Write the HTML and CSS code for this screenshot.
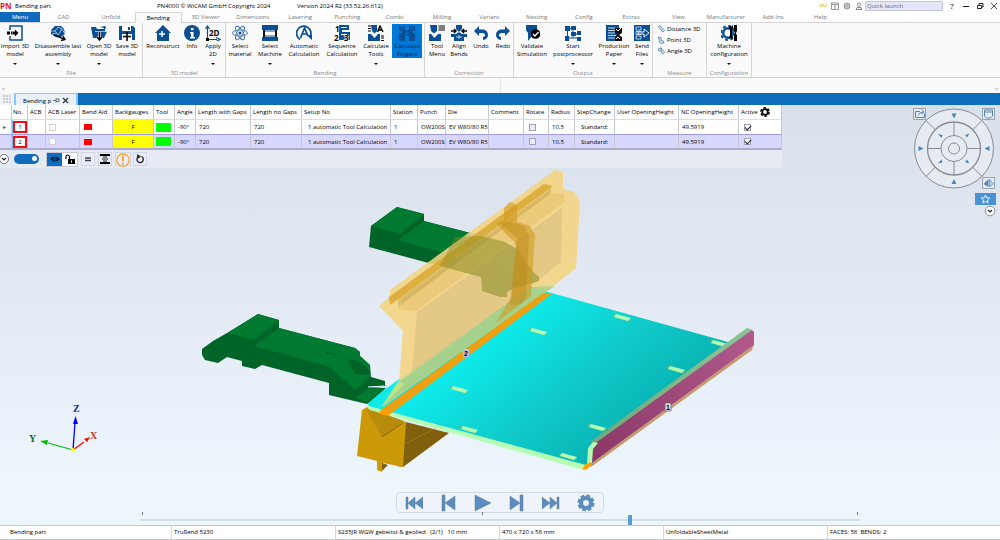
FILE: index.html
```
<!DOCTYPE html>
<html lang="en">
<head>
<meta charset="utf-8">
<title>Bending part</title>
<link rel="stylesheet" href="styles.css">
</head>
<body>
<div class="app">
<header class="titlebar">
  <span class="logo">PN</span>
  <span>Bending part</span>
  <span>PN4000 © WiCAM GmbH Copyright 2024</span>
  <span>Version 2024 R2 (33.52.26.612)</span>
  <div class="title-tools">
    <svg class="ti" viewBox="0 0 8 8"><path d="M0 3l2 2 2-2 2 2 2-3M1 2l2 1 2-1" fill="none" stroke="#e0cf58"/></svg>
    <svg class="ti" viewBox="0 0 8 8"><path d="M.5 1h7v6.500h-7zM.5 2.500h7M4 7V4M3 4h2" fill="none" stroke="#999"/></svg>
    <svg class="ti" viewBox="0 0 8 8"><circle cx="4" cy="4" r="3" fill="#bbb" stroke="#999"/></svg>
    <svg class="ti" viewBox="0 0 8 8"><circle cx="4" cy="2.500" r="1.600" fill="none" stroke="#888"/><path d="M1 7.500l1-2h4l1 2z" fill="none" stroke="#888"/></svg>
    <input class="quick" type="text" placeholder="Quick launch" aria-label="Quick launch">
    <button class="win" aria-label="Help">?</button>
    <button class="win" aria-label="Minimize"><svg class="ti" viewBox="0 0 8 8"><path d="M1 4.500h6" stroke="#222"/></svg></button>
    <button class="win" aria-label="Restore"><svg class="ti" viewBox="0 0 8 8"><path d="M1.500 3.500h4v3h-4zM3 3V1.500h4v3.500H6" fill="none" stroke="#222"/></svg></button>
    <button class="win" aria-label="Close"><svg class="ti" viewBox="0 0 8 8"><path d="M1 1l6 6M7 1L1 7" stroke="#222" stroke-width=".8"/></svg></button>
  </div>
</header>

<nav class="tabs">
  <button class="menu">Menu</button>
  <div class="tablist">
    <button>CAD</button><button>Unfold</button><button class="current">Bending</button><button>3D Viewer</button><button>Dimensions</button><button>Lasering</button><button>Punching</button><button>Combi</button><button>Milling</button><button>Variant</button><button>Nesting</button><button>Config</button><button>Extras</button><button>View</button><button>Manufacturer</button><button>Add-Ins</button><button>Help</button>
  </div>
</nav>

<section class="ribbon">
  <div class="group">
    <div class="tools tools-file">
      <button class="tool"><svg viewBox="0 0 16 16"><path d="M3 5V1h12v14H3v-4" fill="none" stroke="#0a4f94" stroke-width="1.500"/><path d="M0 6.500h3v3H0zM4 6.500h1.500v3H4zM6 6.500h2V4.500L11.500 8 8 11.500v-2H6z" fill="#000"/></svg><span>Import 3D<br>model</span><i></i></button>
      <button class="tool"><svg viewBox="0 0 16 16"><path d="M1 5l4-4h6l3 3 1 5-4 3H6L1 9z" fill="#0a4f94"/><path d="M1 6h4l3-4M5 6l3 4 4-6M8 2l4 2 3 5M2 9l5-1" fill="none" stroke="#fff" stroke-width=".6"/><path d="M4 10l10 4M11 15.500l4-1-2-3.500" fill="none" stroke="#111" stroke-width="1.500"/></svg><span>Disassemble last<br>assembly</span><i></i></button>
      <button class="tool"><svg viewBox="0 0 16 16"><path d="M0 2h5l1 2h8v3H5l-3 6z" fill="#0a4f94"/><path d="M4 6.500h12L13 13H2z" fill="#0a4f94"/><path d="M4 6.500h12" stroke="#fff" stroke-width=".6"/><path d="M9 2l5-1 1 1-1 3h-1V3z" fill="#0a4f94"/><path d="M8.500 7v7.500M6 12l2.500 3L11 12" fill="none" stroke="#fff" stroke-width="2.600"/><path d="M8.500 7v7.500M6 12l2.500 3L11 12" fill="none" stroke="#000" stroke-width="1.500"/></svg><span>Open 3D<br>model</span><i></i></button>
      <button class="tool"><svg viewBox="0 0 16 16"><path d="M0 1h14l2 2v12H0z" fill="#0a4f94"/><path d="M3 1h9v5H3zM3 9h10v6H3z" fill="#fff"/><path d="M9 2h2v3H9z" fill="#0a4f94"/><path d="M8 7v9M4 11.500h8" stroke="#000" stroke-width="1.600"/></svg><span>Save 3D<br>model</span></button>
    </div><h2>File</h2>
  </div>
  <div class="group">
    <div class="tools tools-model">
      <button class="tool"><svg viewBox="0 0 16 16"><path d="M8 0l8 8h-2v8H2V8H0z" fill="#0a4f94"/><path d="M7 6v6M4 9h6" stroke="#fff" stroke-width="1.500"/></svg><span>Reconstruct</span></button>
      <button class="tool"><svg viewBox="0 0 16 16"><circle cx="8" cy="8" r="8" fill="#0a4f94"/><path d="M7 3h2.500v2.200H7zM6 7h3.500v5H11v1.500H6V12h1V8.500H6z" fill="#fff"/></svg><span>Info</span></button>
      <button class="tool"><svg viewBox="0 0 16 16"><path d="M2.500 14V2M.5 4l2-3 2 3M2 14.500h10M11 12.500l4 2-4 2" fill="none" stroke="#0a4f94" stroke-width="1.200"/><path d="M1 13h3v3H1z" fill="#000"/><text x="4" y="10.500" class="glyph">2D</text></svg><span>Apply<br>2D</span><i></i></button>
    </div><h2>3D model</h2>
  </div>
  <div class="group">
    <div class="tools tools-bending">
      <button class="tool"><svg viewBox="0 0 16 16"><g fill="none" stroke="#4379ae" stroke-width=".9"><ellipse cx="8" cy="8" rx="7.500" ry="3"/><ellipse cx="8" cy="8" rx="7.500" ry="3" transform="rotate(60 8 8)"/><ellipse cx="8" cy="8" rx="7.500" ry="3" transform="rotate(120 8 8)"/></g><circle cx="8" cy="8" r="1.500" fill="#0a4f94"/></svg><span>Select<br>material</span></button>
      <button class="tool"><svg viewBox="0 0 16 16"><path d="M0 0h16v5H0zM0 12h16v4H0z" fill="#0a4f94"/><path d="M1 5h2v7H1zM13 5h2v7h-2z" fill="#111"/><path d="M3 6h10M3 11h10" stroke="#0a4f94"/></svg><span>Select<br>Machine</span><i></i></button>
      <button class="tool"><svg viewBox="0 0 16 16"><path d="M4 14.500A7.200 7.200 0 1 1 14 12" fill="none" stroke="#0a4f94" stroke-width="1.700"/><path d="M10.500 10H16v5z" fill="#0a4f94"/><path d="M4.500 13L8.500 3 12 11M6 9h5" fill="none" stroke="#0a4f94" stroke-width="1.700"/></svg><span>Automatic<br>Calculation</span></button>
      <button class="tool"><svg viewBox="0 0 16 16"><path d="M5 0h10v5H8v2h8v8H5z" fill="#0a4f94"/><path d="M7 2.500h6M7 9.500h6" stroke="#fff"/><text x="1" y="6.500" class="digit">1</text><text x="0" y="15.500" class="digit">2</text><text x="10" y="15.500" class="digit">3</text></svg><span>Sequence<br>Calculation</span></button>
      <button class="tool"><svg viewBox="0 0 16 16"><path d="M3 0h6v6L6.500 8.500 4 6zM0 9h3l3.500 4L10 9h2v7H0z" fill="#0a4f94"/><path d="M0 1h3M0 3.500h3M0 6h3M13 11h3M13 13h3M13 15.500h3" stroke="#000"/><path d="M9.500 7l2.500-6 3 6M10.500 5h4" fill="none" stroke="#000" stroke-width="1.400"/></svg><span>Calculate<br>Tools</span><i></i></button>
      <button class="tool active"><svg viewBox="0 0 16 16"><path d="M0 1h6v4h4V1h6v5h-3v2h3v8h-6v-5H6v5H0V8h3V6H0z" fill="#0a4f94"/><path d="M2 1v4M4 1v4M12 1v4M14 1v4M6 8h4M8 5v6" stroke="#0078d7" stroke-width=".7"/></svg><span>Calculate<br>Fingers</span></button>
    </div><h2>Bending</h2>
  </div>
  <div class="group">
    <div class="tools tools-correction">
      <button class="tool"><svg viewBox="0 0 16 16"><path d="M1 0h7v6L5 8.500 2 6zM0 9h2l3.500 4L9 9h3v7H0z" fill="#0a4f94"/><path d="M9.500 1H16M9.500 3H16M9.500 5H16" stroke="#000"/></svg><span>Tool<br>Menu</span></button>
      <button class="tool"><svg viewBox="0 0 16 16"><path d="M5 0h6v4L8 7 5 4zM0 9h5l3-2 3 2h5v3h-3v4H3v-4H0z" fill="#0a4f94"/><path d="M0 6h5M3 4l2 2-2 2M16 6h-5M13 4l-2 2 2 2" fill="none" stroke="#000" stroke-width="1.500"/><path d="M5 12h6M8 10v4" stroke="#fff" stroke-width=".7"/></svg><span>Align<br>Bends</span></button>
      <button class="tool"><svg viewBox="0 0 16 16"><path d="M1 6l5-5v3.500h3.500C13 4.500 15 7 15 10s-2 4.500-5 5v-3c1.500 0 2-1 2-2s-1-2-2.500-2H6v3z" fill="#0a4f94"/></svg><span>Undo</span></button>
      <button class="tool"><svg viewBox="0 0 16 16"><path d="M15 6l-5-5v3.500H6.500C3 4.500 1 7 1 10s2 4.500 5 5v-3c-1.500 0-2-1-2-2s1-2 2.500-2H10v3z" fill="#0a4f94"/></svg><span>Redo</span></button>
    </div><h2>Correction</h2>
  </div>
  <div class="group">
    <div class="tools tools-output">
      <button class="tool"><svg viewBox="0 0 16 16"><path d="M2 0h11v13l-5-2-4 5V8L2 5z" fill="#0a4f94"/><circle cx="11.500" cy="9" r="4.800" fill="#000"/><path d="M9 9l2 2 3.500-4" fill="none" stroke="#fff" stroke-width="1.300"/></svg><span>Validate<br>Simulation</span></button>
      <button class="tool"><svg viewBox="0 0 16 16"><path d="M0 1h5v5H0zM6 7h5v4H6zM0 11h4v5H0zM12 6h4v4h-4zM12 12h4v4h-4zM6 1h5v4H6z" fill="#0a4f94"/><path d="M5 3.500h2M2.500 6v6M4 13h4v-2M11 9h1M8 5v3M8 13h5" fill="none" stroke="#0a4f94"/></svg><span>Start<br>postprocessor</span><i></i></button>
      <button class="tool"><svg viewBox="0 0 16 16"><path d="M0 0h13v16H0z" fill="#0a4f94"/><path d="M2 3h7M2 5.500h8M2 8h7M2 10.500h8M2 13h7" stroke="#dce8f4" stroke-width=".9"/><path d="M9 3h7v5l-3 2 3 2v4H9v-4l3-2-3-2z" fill="#111"/><path d="M10 4l2 2 3-3M10 14l2-2 2 2" stroke="#fff" fill="none"/></svg><span>Production<br>Paper</span><i></i></button>
      <button class="tool"><svg viewBox="0 0 16 16"><path d="M0 0h16v16H0z" fill="#0a4f94"/><path d="M2 2h5v3H2zM2 6.500h5v3H2zM2 11h5v3H2z" fill="none" stroke="#dce8f4" stroke-width=".8"/><path d="M4 7h6V4l5 4-5 4V9H4z" fill="#0a4f94" stroke="#fff" stroke-width=".9"/></svg><span>Send<br>Files</span><i></i></button>
    </div><h2>Output</h2>
  </div>
  <div class="group">
    <div class="measure">
      <button><svg viewBox="0 0 9 9"><path d="M1 2l2-1 5 5-2 2zM3 4l1-1M5 6l1-1" fill="#dbe8f5" stroke="#3d6fa5" stroke-width=".8"/></svg>Distance 3D</button>
      <button><svg viewBox="0 0 9 9"><path d="M1 1l3 1v3l3 1v2H3L2 5z" fill="#dbe8f5" stroke="#3d6fa5" stroke-width=".8"/></svg>Point 3D</button>
      <button><svg viewBox="0 0 9 9"><path d="M1 2l3-1 4 5-2 2-2-3-3-1zM4 1v4" fill="#dbe8f5" stroke="#3d6fa5" stroke-width=".8"/></svg>Angle 3D</button>
    </div><h2>Measure</h2>
  </div>
  <div class="group">
    <div class="tools tools-config">
      <button class="tool"><svg viewBox="0 0 16 16"><circle cx="7" cy="8" r="4.800" fill="none" stroke="#0a4f94" stroke-width="2.500"/><circle cx="7" cy="8" r="7" fill="none" stroke="#0a4f94" stroke-width="2" stroke-dasharray="3 2.500"/><path d="M8 0l2 2 2-2v4l-1 1v6l1 1v2l-2-1-2 1v-2l1-1V5L8 4z" fill="#000"/><path d="M13 0h3v6l-1 2v1l1 1v6h-3v-6l1-1V8l-1-2z" fill="#000"/></svg><span>Machine<br>configuration</span><i></i></button>
    </div><h2>Configuration</h2>
  </div>
</section>
<div class="strip"><span>▿</span><b></b><span>▿</span></div>

<div class="docbar">
  <span class="grid-handle"><svg viewBox="0 0 8 8"><path d="M0 1h8M0 4h8M0 7h8" stroke="#c8cdd4" stroke-width="2" stroke-dasharray="2 1"/></svg></span>
  <div class="doctab"><span>Bending p</span>
    <svg viewBox="0 0 7 7"><path d="M0 3.500h3M3 1.500v4M3 2h3v2.500H3" fill="none" stroke="#555" stroke-width=".8"/></svg>
    <button aria-label="Close tab"><svg viewBox="0 0 7 7"><path d="M1 1l5 5M6 1L1 6" stroke="#333" stroke-width="1.200"/></svg></button>
  </div>
</div>

<main class="view">
  <svg class="scene" viewBox="0 105 1000 420" role="img" aria-label="3D bending simulation">
    <defs>
      <linearGradient id="plate" gradientUnits="userSpaceOnUse" x1="480" y1="345" x2="590" y2="480"><stop offset="0" stop-color="#0eeaea"/><stop offset=".5" stop-color="#10caca"/><stop offset="1" stop-color="#08b0b0"/></linearGradient>
      <linearGradient id="flange" gradientUnits="userSpaceOnUse" x1="592" y1="455" x2="754" y2="335"><stop offset="0" stop-color="#8a3868"/><stop offset="1" stop-color="#b25a8c"/></linearGradient>
      <linearGradient id="rim" gradientUnits="userSpaceOnUse" x1="592" y1="445" x2="754" y2="330"><stop offset="0" stop-color="#70a87e"/><stop offset="1" stop-color="#8cc496"/></linearGradient>
      <g id="slot"><path d="M-9-3l13 3 5 3-4 1-13-4z" fill="#70b87a"/><path d="M-6-3L9 1 6 4-8 0z" fill="#b4ffb4"/></g>
    </defs>
    <!-- rear gauge finger -->
    <path d="M371 226L397 207 424 214V221L505 242 518 250 532 271 539 277V281L514 288 507 292V297L500 297 482 291V288L481 277 369 247z" fill="#006428"/>
    <path d="M371 226L397 207 424 214 400 234z" fill="#007a30"/><path d="M424 221L505 242 518 250 532 271 524 278 448 254 398 240z" fill="#007a30"/>
    <!-- die -->
    <path d="M406 422l43 11-46 34-6-1z" fill="#80600c"/><path d="M405 444l35-18" stroke="#b08a20" stroke-width=".6"/>
    <path d="M362 410l5-3 39 15-3 45-20-4-1 9-5-2v-9l-20-5z" fill="#cc9a08"/><path d="M366 409l38 12-22 16z" fill="#b88b0a"/><path d="M382 437l21-14" stroke="#80600c"/><path d="M382 463l6 2-6 6z" fill="#80600c"/>
    <!-- sheet -->
    <path d="M367 402l31-22 132-93 198 55 7 3-138 99-5 22-9 2-216-62z" fill="url(#plate)"/>
    <path d="M367 402l2 4 217 59-2 5-214-60-3-3z" fill="#b4ffb4"/>
    <use href="#slot" x="538" y="331"/><use href="#slot" x="459" y="389"/><use href="#slot" x="469" y="429"/><use href="#slot" x="568" y="456"/><use href="#slot" x="597" y="427"/><use href="#slot" x="676" y="369"/><use href="#slot" x="622" y="317"/><use href="#slot" x="719" y="343"/>
    <!-- flange -->
    <path d="M592 463l162-118-2 5-161 117z" fill="#c79a6c"/>
    <path d="M590 442l157-114 6 2-156 115z" fill="url(#rim)"/>
    <path d="M592 463v-15l5-6 155-112 2 2v13z" fill="url(#flange)"/>
    <path d="M587 464l1-16 5-6 5 1-5 6-1 14z" fill="#b4ffb4"/><path d="M586 464l5-2 1 3-6 5-4-1z" fill="#ffa000"/>
    <!-- punch -->
    <path d="M379 306L390 296V290L555 170 563 172V189L574 192 580 201 576 268 546 292 382 407 399 382 403 331z" fill="#f5d480" fill-opacity=".88"/>
    <path d="M417 312L562 208 561 262 530 287 412 372z" fill="#bfa070" fill-opacity=".28"/>
    <path d="M416 311L565 202 564 194 548 193 406 296 398 309z" fill="#dcb050" fill-opacity=".3"/>
    <path d="M389 297l155-113 9 2-163 119z" fill="#d6a224" fill-opacity=".75"/>
    <path d="M390 305l161-117 0 5-153 114v-8z" fill="#b38f30" fill-opacity=".35"/>
    <path d="M399 382l131-95 25-1-173 120z" fill="#60c88c" fill-opacity=".42"/>
    <path d="M381 407l17-26 7 3z" fill="#d7ed7e" fill-opacity=".6"/>
    <path d="M455 237L480 236 505 242 518 250 532 271 539 277V281L514 288 507 292V297L500 297 482 291V288L481 277 440 266z" fill="#84861e" fill-opacity=".4"/>
    <path d="M504 208l6-6 7 3v17l13 4 5 9-4 61-35 27 16-27 4-52-20-21 8-3z" fill="#d09a1c" fill-opacity=".6"/><path d="M512 222l12 4 5 9-3 63-5 6-11 1 7-67-17-15z" fill="#b88618" fill-opacity=".4"/>
    <path d="M382 409l160-115 11-1-164 122-9-1z" fill="#eda012"/><path d="M380 411l4-2 6 2-1 5-9-2z" fill="#ffa000"/>
    <!-- front gauge finger -->
    <path d="M202 349l11-8 14-8 31-19 21 6v8l76 20 5 4v4l10 9 1 12 14 4v5l-17 1 18 1-19 16-38-9v-12l-67-18-7 4-13-3v-5l-15-4-9 6-13-3-3-5z" fill="#006428"/>
    <path d="M228 333l30-19 21 6-25 20zM279 328l76 20 5 4v4l10 9v12l-15 13-25-23-76-21zM368 389l17-1-18 14-12-4z" fill="#007a30"/><path d="M347 359l12 2 11 10-2 4-13-1z" fill="#006428"/><path d="M325 352l13 3M326 354h4" stroke="#006428"/><path d="M368 387l16-1" stroke="#eaf2fa"/>
    <!-- bend tags -->
    <path d="M463 349h6v8h-6z" fill="#b9bdf0"/><text x="464" y="356" class="tag">2</text><path d="M665 403h6v8h-6z" fill="#ddd" stroke="#555" stroke-width=".6"/><text x="666" y="410" class="tag">1</text>
    <!-- axes -->
    <path d="M73 450l2-27" stroke="#00f" stroke-width="1.300"/><path d="M75.500 416l2.500 8h-5z" fill="#00f"/><path d="M73 450l-25-7" stroke="#0b0" stroke-width="1.200"/><path d="M40 441l8-1-1 5z" fill="#0b0"/><path d="M73 450l11-8" stroke="red" stroke-width="1.200"/><path d="M90 437l-3 5-3-3z" fill="red"/><circle cx="73" cy="450" r="2" fill="#ff0"/>
    <text x="73" y="412" class="axis axis-z">Z</text><text x="29" y="442" class="axis axis-y">Y</text><text x="90" y="439" class="axis axis-x">X</text>
  </svg>

  <div class="panel">
    <table>
      <colgroup><col class="w12"><col class="w16"><col class="w18"><col class="w34"><col class="w33"><col class="w41"><col class="w21"><col class="w21"><col class="w55"><col class="w51"><col class="w89"><col class="w27"><col class="w28"><col class="w43"><col class="w35"><col class="w25"><col class="w26"><col class="w40"><col class="w64"><col class="w60"><col class="w43"></colgroup>
      <thead><tr><th></th><th>No.</th><th>ACB</th><th>ACB Laser</th><th>Bend Aid</th><th>Backgauges</th><th>Tool</th><th>Angle</th><th>Length with Gaps</th><th>Length no Gaps</th><th>Setup No</th><th>Station</th><th>Punch</th><th>Die</th><th>Comment</th><th>Rotate</th><th>Radius</th><th>StepChange</th><th>User OpeningHeight</th><th>NC OpeningHeight</th><th>Active <svg class="cog" viewBox="0 0 10 10"><circle cx="5" cy="5" r="2.800" fill="none" stroke="#000" stroke-width="1.800"/><circle cx="5" cy="5" r="4.200" fill="none" stroke="#000" stroke-width="1.400" stroke-dasharray="2.600 1.800"/></svg></th></tr></thead>
      <tbody>
        <tr><td class="mark">▸</td><td class="no"><span>1</span></td><td></td><td class="pick"><input type="checkbox" class="faint" aria-label="ACB Laser 1"></td><td><span class="swatch"></span></td><td class="gauge">F</td><td class="ok"><span></span></td><td>-90°</td><td>720</td><td>720</td><td class="setup">1 automatic Tool Calculation</td><td>1</td><td>OW200S</td><td>EV W80/80 R5</td><td></td><td><input type="checkbox" aria-label="Rotate 1"></td><td>10.5</td><td class="step">Standard:</td><td></td><td>49.5919</td><td><input type="checkbox" checked aria-label="Active 1"></td></tr>
        <tr class="selected"><td></td><td class="no"><span>2</span></td><td></td><td class="pick"><input type="checkbox" class="faint" aria-label="ACB Laser 2"></td><td><span class="swatch"></span></td><td class="gauge">F</td><td class="ok"><span></span></td><td>-90°</td><td>720</td><td>720</td><td class="setup">1 automatic Tool Calculation</td><td>1</td><td>OW200S</td><td>EV W80/80 R5</td><td></td><td><input type="checkbox" aria-label="Rotate 2"></td><td>10.5</td><td class="step">Standard:</td><td></td><td>49.5919</td><td><input type="checkbox" checked aria-label="Active 2"></td></tr>
      </tbody>
    </table>
    <div class="panel-tools">
      <button class="round" aria-label="Collapse"><svg viewBox="0 0 10 10"><circle cx="5" cy="5" r="4.500" fill="#fff" stroke="#555" stroke-width=".8"/><path d="M3 4l2 2 2-2" fill="none" stroke="#222" stroke-width="1.200"/></svg></button>
      <input class="switch" type="checkbox" role="switch" checked aria-label="Show bends">
      <div class="pair">
        <button class="on" aria-label="Show"><svg viewBox="0 0 10 10"><path d="M0 5q5-5 10 0-5 5-10 0z" fill="#001a40"/><circle cx="5" cy="5" r="1.600" fill="#0f6cbd"/><circle cx="5" cy="5" r=".8" fill="#001a40"/></svg></button>
        <button aria-label="Unlock"><svg viewBox="0 0 10 10"><path d="M3 5h7v5H3z" fill="#000"/><path d="M1 5V2.500Q1 1 2.500 1T4.500 2.500V5" fill="none" stroke="#000" stroke-width="1.200"/><path d="M6.500 6.500v2" stroke="#fff"/></svg></button>
      </div>
      <button class="flat" aria-label="Equal"><svg viewBox="0 0 10 10"><path d="M2 4h6M2 6.500h6" stroke="#444" stroke-width="1.300"/></svg></button>
      <button class="flat" aria-label="Align"><svg viewBox="0 0 10 10"><path d="M0 1h10M0 9h10" stroke="#000" stroke-width="2"/><path d="M2 5h6M3 3h4M3 7h4" stroke="#222"/></svg></button>
      <div class="joined">
        <button class="flat warn" aria-label="Warnings"><svg viewBox="0 0 14 14"><circle cx="7" cy="7" r="6.200" fill="none" stroke="#f7a21b" stroke-width="1.200"/><path d="M7 2.500v6M7 9.800v1.800" stroke="#f7a21b" stroke-width="1.700"/></svg></button>
        <button class="flat" aria-label="Reset"><svg viewBox="0 0 10 10"><path d="M3 3a3.200 3.200 0 1 0 3.500-.5" fill="none" stroke="#222" stroke-width="1.300"/><path d="M2 0l4 2.500L2.500 5z" fill="#222"/></svg></button>
      </div>
    </div>
  </div>

  <svg class="wheel" viewBox="910 105 90 115" role="img" aria-label="View navigation">
    <g fill="none" stroke="#868c92"><circle cx="954" cy="148.500" r="39.500" fill="#e6ebf2"/><circle cx="954" cy="148.500" r="26.500" stroke-width="1.300"/><circle cx="954" cy="148.500" r="13"/><circle cx="954" cy="148.500" r="5.500"/><path d="M954 122v13.500M954 161.500V175M927.500 148.500H941M967 148.500h13.500M926 120.500l9.500 9.500M982 120.500l-9.500 9.500M926 176.500l9.500-9.500M982 176.500l-9.500-9.500"/></g>
    <path d="M951.500 113.500h5l-2.500 5zM951.500 184h5l-2.500-5zM918.500 146v5l5-2.500zM989.500 146v5l-5-2.500zM938 134l4.500 1-1 3zM969.500 133.500l-4.500 1.500 2 2.500zM938 163.500l4.500-1-1-3zM969.500 163.500l-4.500-1.500 2-2.500z" fill="#4a86bd"/>
    <g fill="#e8ecf2" stroke="#9aa0a6"><path d="M913.500 108.500h12v11h-12zM982.500 108.500h12v11h-12zM982.500 177.500h12v11h-12z"/></g>
    <path d="M920 111.500h-4.500v6h9v-4M918 115.500q1-3 5-3.500M921.500 110l2.500 2-2.500 2M984.500 110h8v6l-2 2h-4l-2-2zM984.500 112h8" fill="none" stroke="#4a86bd"/><path d="M988.500 179v8l-5-3z" fill="#4a86bd"/><path d="M989.500 179v8l4-3z" fill="#b5cde4" stroke="#4a86bd" stroke-width=".6"/>
    <path d="M975 193h21v12h-21z" fill="#4a92d2"/><path d="M985.500 195l1.200 2.800 3 .2-2.200 2 .7 3-2.700-1.600-2.700 1.600.7-3-2.200-2 3-.2z" fill="none" stroke="#fff" stroke-width=".9"/>
    <circle cx="990" cy="211" r="4.800" fill="#fff" stroke="#777" stroke-width=".8"/><path d="M988 210l2 2 2-2" fill="none" stroke="#222" stroke-width="1.200"/>
  </svg>

  <div class="player">
    <button aria-label="First"><svg viewBox="0 0 18 18"><path d="M1 3h2v12H1zM10 3v12L3 9zM18 3v12L10 9z"/></svg></button>
    <button aria-label="Previous"><svg viewBox="0 0 18 18"><path d="M3 1h3v16H3zM16 2v14L6 9z"/></svg></button>
    <button aria-label="Play"><svg viewBox="0 0 18 18"><path d="M1 1l16 8-16 8z"/></svg></button>
    <button aria-label="Next"><svg viewBox="0 0 18 18"><path d="M12 1h3v16h-3zM2 2v14l10-7z"/></svg></button>
    <button aria-label="Last"><svg viewBox="0 0 18 18"><path d="M15 3h2v12h-2zM0 3v12l8-6zM8 3v12l7-6z"/></svg></button>
    <button aria-label="Playback settings"><svg viewBox="0 0 18 18"><circle cx="9" cy="9" r="5" fill="none" stroke="#5b8cbe" stroke-width="4"/><circle cx="9" cy="9" r="7.500" fill="none" stroke="#5b8cbe" stroke-width="2" stroke-dasharray="3.900 2"/></svg></button>
  </div>
  <div class="timeline">
    <div class="ticks"><i></i><i></i><i></i></div>
    <input type="range" min="0" max="1000" value="681" aria-label="Simulation position">
  </div>
</main>

<footer class="status"><span>Bending part</span><span>Trußend 5230</span><span>S235JR WGW gebeitst &amp; geolied&nbsp;&nbsp; (2/1)&nbsp;&nbsp; 10 mm</span><span>470 x 720 x 58 mm</span><span>UnfoldableSheetMetal</span><span>FACES: 58&nbsp; BENDS: 2</span></footer>
</div>
</body>
</html>
```
FILE: styles.css
```
* { box-sizing: border-box; }
body { margin: 0; }
body, button, input { font: 6px/8px "Open Sans", "Noto Sans", sans-serif; color: #000; }
button { border: 0; padding: 0; background: none; white-space: nowrap; }
.app { min-height: 100vh; display: flex; flex-direction: column; background: #fff; }

.titlebar { display: grid; grid-template-columns: 15px 142px 140px 1fr auto; align-items: center; height: 12px; padding-right: 1px; }
.logo { color: #e3141c; font-size: 8px; font-weight: 700; }
.title-tools { display: flex; align-items: center; gap: 4px; }
.ti { display: block; width: 8px; height: 8px; }
.quick { width: 78px; height: 10px; padding: 0 1px; background: #e6e6fa; border: 1px solid #c6c6d6; border-radius: 1px; margin-left: -2px; }
.quick::placeholder { color: #666; opacity: 1; }
.win { width: 10px; display: grid; place-items: center; font-size: 8px; }

.tabs { display: flex; height: 11px; border-bottom: 1px solid #d4d4d4; }
.tabs button { color: #777; }
.tabs .menu { width: 40px; background: #0f6cbd; color: #fff; }
.tablist { display: grid; grid-template-columns: repeat(17, 1fr); flex: 0 1 804px; }
.tabs .current { color: #000; background: #fafafa; border: 1px solid #d4d4d4; border-bottom: 0; margin-bottom: -1px; }

.ribbon { display: flex; height: 55px; background: #fafafa; border-bottom: 1px solid #cfcfcf; }
.group { display: flex; flex-direction: column; justify-content: space-between; border-right: 1px solid #d6d6d6; padding-top: 1px; }
.group h2 { margin: 0; font-size: 6px; font-weight: 400; line-height: 8px; text-align: center; color: #8c8c8c; }
.tools { display: grid; align-items: start; }
.tools-file { grid-template-columns: 30px 56px 26px 30px; }
.tools-model { grid-template-columns: 40px 18px 24px; }
.tools-bending { grid-template-columns: 28px 32px 36px 40px 28px 34px; }
.tools-correction { grid-template-columns: 24px 20px 24px 20px; }
.tools-output { grid-template-columns: 36px 46px 36px 20px; }
.tools-config { grid-template-columns: 44px; }
.tool { display: flex; flex-direction: column; align-items: center; justify-content: flex-start; text-align: center; }
.tool svg { display: block; width: 16px; height: 16px; margin: 1px 0; }
.tool i { width: 4px; margin-top: 5px; border: 2px solid transparent; border-top-color: #111; border-bottom: 0; }
.tool.active { background: #0078d7; color: #0b2b52; margin: 0 2px; }
.glyph { font: 700 8px "Open Sans", sans-serif; }
.digit { font: 700 8px "Open Sans", sans-serif; stroke: #fff; stroke-width: 1px; paint-order: stroke; }
.measure { display: flex; flex-direction: column; gap: 3px; width: 53px; padding: 1px 4px; }
.measure button { display: flex; align-items: center; gap: 1px; }
.measure svg { width: 9px; height: 8px; }

.strip { display: flex; align-items: end; height: 15px; background: #fafafa; padding: 0 2px; color: #999; }
.strip b { flex: 1; align-self: stretch; background: linear-gradient(#e6e6e6, #e6e6e6) 50% 0 / 1px 100% no-repeat; }

.docbar { display: flex; height: 12px; background: #0f6cbd; }
.grid-handle { display: grid; place-items: center; width: 14px; background: #f1f3f6; }
.grid-handle svg { width: 8px; height: 8px; }
.doctab { display: flex; align-items: center; gap: 2px; width: 64px; padding: 2px 0 0 7px; background: #e9f1fa; border: solid #86c8fa; border-width: 1px 2px 0; }
.doctab svg { display: block; width: 7px; height: 7px; }

.view { position: relative; flex: 1; min-height: 320px; background: linear-gradient(#d8e0e9, #e1e8f2 38%, #edf5fd 90%); }
.scene { position: absolute; inset: 0; width: 100%; height: 100%; }
.tag { font: 700 7px "Liberation Sans", sans-serif; }
.axis { font: 700 10px "Liberation Serif", serif; }
.axis-x { fill: #b33a2e; }
.axis-y { fill: #0a6b2c; }
.axis-z { fill: #2020a8; }

.panel { position: absolute; top: 0; left: 0; background: #e6eaf3; }
table { border-collapse: separate; border-spacing: 0; table-layout: fixed; width: 782px; background: #fff; }
th, td { height: 14px; padding: 0 0 0 3px; border-right: 1px solid #c6c7d2; font-weight: 400; text-align: left; white-space: nowrap; line-height: 8px; }
th { height: 15px; border-bottom: 1px solid #dcdce2; padding-left: 2px; }
th:nth-child(2) { padding-left: 1px; }
.selected td { height: 16px; background: #d8d8ff; border-top: 1px solid #9b9bf0; border-bottom: 2px solid #acacd2; }
.mark { color: #555; }
.no, .selected .no { padding: 0; border-left: 1px solid #7cc4f5; }
.no span { display: block; border: 2px solid #f01010; line-height: 8px; text-align: center; background: #fff; }
td.gauge, .selected td.gauge { background: #ff0; text-align: center; padding: 0; }
.ok span { display: block; width: 15px; height: 9px; margin-left: -1px; background: #0f0; }
.swatch { display: block; width: 8px; height: 6px; margin-left: 1px; background: #f00; }
td.setup, td.step { padding-left: 6px; }
td input { appearance: none; display: block; width: 7px; height: 7px; margin: 0 0 0 2px; border: 1px solid #a2a2b4; background: #ececf8; }
td input.faint { border-color: #d0d0d0; background: #fff; margin-left: 0; }
td input:checked { background: #fff; }
td input:checked::before { content: ""; display: block; width: 5px; height: 3px; border: solid #222; border-width: 0 0 1px 1px; transform: rotate(-45deg); }
.cog { display: inline-block; width: 10px; height: 10px; vertical-align: middle; margin-left: 1px; }
.w12 { width: 12px; } .w16 { width: 16px; } .w18 { width: 18px; } .w21 { width: 21px; } .w25 { width: 25px; } .w26 { width: 26px; } .w27 { width: 27px; } .w28 { width: 28px; } .w33 { width: 33px; } .w34 { width: 34px; } .w35 { width: 35px; } .w40 { width: 40px; } .w41 { width: 41px; } .w43 { width: 43px; } .w51 { width: 51px; } .w55 { width: 55px; } .w60 { width: 60px; } .w64 { width: 64px; } .w89 { width: 89px; }

.panel-tools { display: flex; align-items: center; gap: 3px; height: 18px; }
.panel-tools svg { display: block; width: 10px; height: 10px; margin: auto; }
.round { margin-left: -1px; }
.switch { appearance: none; width: 25px; height: 10px; margin: 0 4px 0 2px; padding: 2px; border-radius: 5px; background: #0f6cbd; }
.switch::before { content: ""; display: block; width: 5px; height: 5px; margin-left: auto; border-radius: 50%; background: #fff; }
.pair { display: flex; border: 1px solid #c4c8d2; background: #fff; }
.pair button { width: 15px; height: 13px; }
.pair .on { background: #0f6cbd; }
.flat { width: 14px; height: 14px; border: 1px solid #d2d6e2; background: #e9ecf8; }
.flat svg { width: 10px; height: 10px; }
.joined { display: flex; gap: 2px; }
.warn { width: 16px; }
.warn svg { width: 14px; height: 14px; }

.wheel { position: absolute; top: 0; right: 0; width: 90px; height: 115px; }

.player { position: absolute; left: 50%; bottom: 12px; transform: translateX(-50%); display: flex; justify-content: space-around; align-items: center; width: 208px; height: 21px; border: 1px solid #d3d7de; border-radius: 4px; background: #eff3fa; }
.player svg { display: block; width: 18px; height: 18px; fill: #5b8cbe; stroke: #6b7f96; stroke-width: .5px; }

.timeline { position: absolute; left: 14%; right: 14%; bottom: 0; height: 14px; }
.ticks { display: grid; grid-template-columns: 10fr 11fr auto; padding: 1px 2px 0; }
.ticks i { width: 1px; height: 3px; background: #777; }
.timeline input { appearance: none; display: block; width: 100%; height: 10px; margin: 0; background: linear-gradient(#d6dce4, #d6dce4) 0 50% / 100% 2px no-repeat; }
.timeline input::-webkit-slider-thumb { appearance: none; width: 4px; height: 10px; background: #5b9bd5; }

.status { display: grid; grid-template-columns: repeat(6, 1fr); align-items: center; height: 15px; padding: 0 8px; border: solid #c3c9d6; border-width: 1px 0; }
.status span { padding-left: 2px; border-right: 1px solid #d4d8e0; line-height: 13px; white-space: nowrap; }
.status span:last-child { border-right: 0; }
```
